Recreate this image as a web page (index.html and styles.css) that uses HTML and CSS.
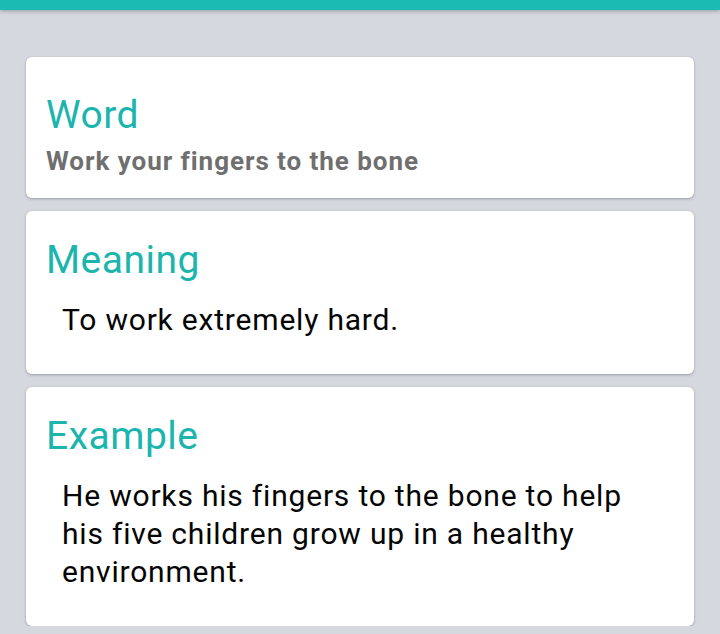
FILE: index.html
```html
<!DOCTYPE html>
<html lang="en">
<head>
<meta charset="utf-8">
<title>Word</title>
<link rel="stylesheet" href="styles.css">
</head>
<body>
<header class="topbar"></header>
<main class="content">
  <section class="card card-word">
    <h2 class="card-title">Word</h2>
    <p class="word-text">Work your fingers to the bone</p>
  </section>
  <section class="card">
    <h2 class="card-title">Meaning</h2>
    <p class="card-body">To work extremely hard.</p>
  </section>
  <section class="card">
    <h2 class="card-title">Example</h2>
    <p class="card-body">He works his fingers to the bone to help his five children grow up in a healthy environment.</p>
  </section>
</main>
</body>
</html>
```
FILE: styles.css
```css
* { box-sizing: border-box; }
html, body {
  margin: 0;
  padding: 0;
  background: #d5d8df;
  font-family: Roboto, "Noto Sans", "Liberation Sans", sans-serif;
}
.topbar {
  height: 10px;
  background: #1bbab3;
  box-shadow: 0 1px 4px rgba(0, 0, 0, 0.3);
  position: relative;
  z-index: 1;
}
.content {
  padding: 47px 26px 0;
  display: flex;
  flex-direction: column;
  gap: 13px;
}
.card {
  background: #ffffff;
  border-radius: 6px;
  box-shadow: 0 1px 3px rgba(0, 0, 0, 0.28);
  padding: 26px 21px 35px 20px;
}
.card-word {
  padding-top: 34px;
  padding-bottom: 22px;
}
.card-title {
  margin: 0;
  font-size: 39px;
  line-height: 46px;
  font-weight: 400;
  letter-spacing: 0.5px;
  color: #1bb5ae;
}
.card-word .card-title {
  line-height: 48px;
}
.word-text {
  margin: 7px 0 0;
  font-size: 26px;
  line-height: 30px;
  font-weight: 700;
  letter-spacing: 0.95px;
  color: #6f6f6f;
}
.card-body {
  margin: 18px 0 0;
  padding: 0 15px 0 16px;
  font-size: 30px;
  line-height: 38px;
  letter-spacing: 0.8px;
  color: #050505;
}
```
